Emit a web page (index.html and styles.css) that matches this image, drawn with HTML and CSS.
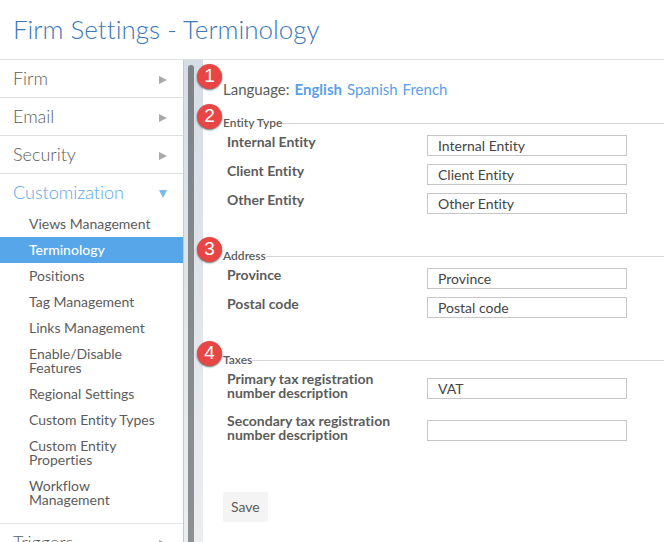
FILE: index.html
```html
<!DOCTYPE html>
<html lang="en">
<head>
<meta charset="utf-8">
<title>Firm Settings - Terminology</title>
<link rel="stylesheet" href="styles.css">
</head>
<body>
<header class="page-header"><h1>Firm Settings - Terminology</h1></header>
<div class="layout">
  <nav class="sidebar" aria-label="Settings">
    <a class="group" href="#">Firm<svg class="arrow" viewBox="0 0 8 8"><path d="M0 0L8 4L0 8Z"/></svg></a>
    <a class="group" href="#">Email<svg class="arrow" viewBox="0 0 8 8"><path d="M0 0L8 4L0 8Z"/></svg></a>
    <a class="group" href="#">Security<svg class="arrow" viewBox="0 0 8 8"><path d="M0 0L8 4L0 8Z"/></svg></a>
    <a class="group open" href="#">Customization<svg class="arrow" viewBox="0 0 8 8"><path d="M0 0H8L4 8Z"/></svg></a>
    <ul class="submenu">
      <li><a href="#">Views Management</a></li>
      <li><a class="current" href="#">Terminology</a></li>
      <li><a href="#">Positions</a></li>
      <li><a href="#">Tag Management</a></li>
      <li><a href="#">Links Management</a></li>
      <li><a href="#">Enable/Disable Features</a></li>
      <li><a href="#">Regional Settings</a></li>
      <li><a href="#">Custom Entity Types</a></li>
      <li><a href="#">Custom Entity Properties</a></li>
      <li><a href="#">Workflow Management</a></li>
    </ul>
    <a class="group" href="#">Triggers<svg class="arrow" viewBox="0 0 8 8"><path d="M0 0L8 4L0 8Z"/></svg></a>
  </nav>
  <div class="track"><div class="thumb"></div></div>
  <main class="content">
    <div class="languages">
      <span class="badge">1</span>
      <span>Language:</span>
      <a class="selected" href="#">English</a>
      <a href="#">Spanish</a>
      <a href="#">French</a>
    </div>
    <form>
      <fieldset>
        <legend><span class="badge">2</span>Entity Type</legend>
        <div class="fields">
          <label for="internal">Internal Entity</label><input id="internal" type="text" value="Internal Entity">
          <label for="client">Client Entity</label><input id="client" type="text" value="Client Entity">
          <label for="other">Other Entity</label><input id="other" type="text" value="Other Entity">
        </div>
      </fieldset>
      <fieldset>
        <legend><span class="badge">3</span>Address</legend>
        <div class="fields">
          <label for="province">Province</label><input id="province" type="text" value="Province">
          <label for="postal">Postal code</label><input id="postal" type="text" value="Postal code">
        </div>
      </fieldset>
      <fieldset>
        <legend><span class="badge">4</span>Taxes</legend>
        <div class="fields tall">
          <label for="primary">Primary tax registration number description</label><input id="primary" type="text" value="VAT">
          <label for="secondary">Secondary tax registration number description</label><input id="secondary" type="text">
        </div>
      </fieldset>
      <button class="save" type="button">Save</button>
    </form>
  </main>
</div>
</body>
</html>
```
FILE: styles.css
```css
* { box-sizing: border-box; }

body {
  margin: 0;
  height: 100vh;
  display: flex;
  flex-direction: column;
  overflow: hidden;
  background: #fff;
  color: #5c5c5c;
  font: 14px/14px Lato, sans-serif;
  font-variant-ligatures: none;
}

a { color: inherit; text-decoration: none; }

.page-header {
  flex: none;
  padding: 13px 13px 14px;
  border-bottom: 1px solid #dfe1e4;
}

h1 {
  margin: 0;
  color: #3b78b8;
  font-size: 26px;
  line-height: 32px;
  font-weight: 300;
}

.layout { flex: 1; min-height: 0; display: flex; }

.sidebar {
  flex: none;
  width: 184px;
  overflow: hidden;
  border-right: 1px solid #c3cad1;
}

.group {
  display: flex;
  align-items: center;
  justify-content: space-between;
  height: 38px;
  padding: 0 16px 2px 13px;
  border-bottom: 1px solid #dcdee0;
  font-size: 18px;
  line-height: 22px;
  font-weight: 300;
}

.group.open { height: 37px; border-bottom: 0; color: #5aa5ea; }

.arrow { width: 8px; height: 8px; margin-top: 5px; fill: #a9a9a9; }
.open .arrow { fill: #7ab8ee; }

.submenu {
  margin: 0;
  padding: 0 0 10px;
  list-style: none;
  border-bottom: 1px solid #e3e5e7;
}

.submenu a { display: block; padding: 6px 24px 6px 29px; }
.submenu .current { background: #57a6e9; color: #fff; font-weight: 500; }

.track {
  flex: none;
  width: 19px;
  padding: 5px 0 0 4px;
  background: linear-gradient(#d6dde6, #ecedef);
}

.thumb {
  width: 6px;
  height: 100%;
  border-radius: 3px 3px 0 0;
  background: linear-gradient(#7e8287, #8e8f90);
}

.content { flex: 1; min-width: 0; padding: 19px 0 0 20px; }

.languages {
  position: relative;
  display: flex;
  gap: 5px;
  margin-bottom: 17px;
  font-size: 15px;
  line-height: 20px;
}

.languages a { color: #5a9fe8; }
.languages .selected { font-weight: 700; }

.badge {
  position: absolute;
  left: -26px;
  top: -12px;
  width: 25px;
  height: 25px;
  border-radius: 50%;
  background: #e84545;
  box-shadow: 0 1px 2px rgba(0, 0, 0, 0.6);
  color: #fff;
  font: 19px/24px "Liberation Sans", sans-serif;
  text-align: center;
}

.languages .badge { top: -15px; }

fieldset {
  min-width: 0;
  margin: 0 0 35px;
  padding: 5px 0 0 4px;
  border: 0;
  border-top: 1px solid #d5d6d7;
}

legend {
  position: relative;
  margin-left: -4px;
  padding: 0;
  font-size: 12px;
  font-weight: 600;
}

.fields {
  display: grid;
  grid-template-columns: 200px minmax(0, 200px);
  row-gap: 8px;
  align-items: start;
}

.tall input { margin-top: 6px; }

label {
  padding: 0 24px 6px 0;
  font-weight: 700;
}

input {
  width: 100%;
  height: 21px;
  padding: 0 10px;
  border: 1px solid #c6c6c6;
  border-radius: 0;
  background: #fff;
  color: #444;
  font: 14px/19px Lato, sans-serif;
  font-variant-ligatures: none;
}

.save {
  height: 30px;
  margin-top: 9px;
  padding: 0 8px;
  border: 0;
  border-radius: 2px;
  background: #f4f4f4;
  color: #5c5c5c;
  font: 14px/30px Lato, sans-serif;
}
```
